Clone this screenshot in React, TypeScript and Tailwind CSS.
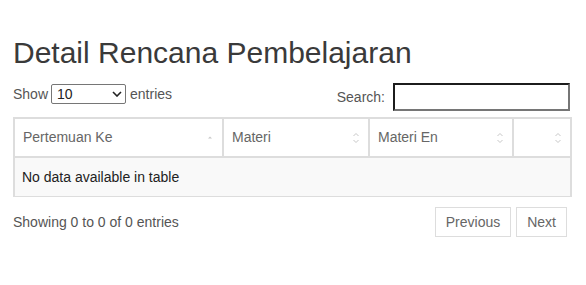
import React from "react";

function SortBoth() {
  return (
    <svg width="8" height="14" viewBox="0 0 8 14" className="shrink-0">
      <path d="M1.5 5 L4 2.5 L6.5 5" fill="none" stroke="#c8c8c8" strokeWidth="1" />
      <path d="M1.5 9 L4 11.5 L6.5 9" fill="none" stroke="#c8c8c8" strokeWidth="1" />
    </svg>
  );
}

function SortAsc() {
  return (
    <svg width="8" height="14" viewBox="0 0 8 14" className="shrink-0">
      <path d="M2 7.5 L4 5.5 L6 7.5 Z" fill="#c8c8c8" />
    </svg>
  );
}

export default function App() {
  const cols = [
    { label: "Pertemuan Ke", w: "w-[209px]", asc: true },
    { label: "Materi", w: "w-[146px]", asc: false },
    { label: "Materi En", w: "w-[144px]", asc: false },
    { label: "", w: "w-[58px]", asc: false },
  ];
  return (
    <div
      className="w-[586px] h-[285px] bg-white pl-[13px] pr-[16px] pt-[36px] text-[14px] text-[#333]"
      style={{ fontFamily: '"Liberation Sans", Arial, sans-serif' }}
    >
      <h1 className="text-[30px] leading-[33px] text-[#3a3a3a] font-normal m-0">
        Detail Rencana Pembelajaran
      </h1>

      <div className="flex justify-between items-start mt-[14px]">
        <div className="flex items-center h-[20px] mt-[1px] text-[#555]">
          <span>Show</span>
          <div className="relative ml-[3px] mr-[4px]">
            <select
              className="appearance-none w-[75px] h-[20px] border border-[#767676] rounded-[2px] bg-white pl-[5px] text-[14px] text-[#222] leading-[18px]"
              defaultValue="10"
            >
              <option value="10">10</option>
              <option value="25">25</option>
              <option value="50">50</option>
              <option value="100">100</option>
            </select>
            <svg
              width="10"
              height="6"
              viewBox="0 0 10 6"
              className="absolute right-[4px] top-[7px] pointer-events-none"
            >
              <path d="M1 1 L5 5 L9 1" fill="none" stroke="#222" strokeWidth="1.6" />
            </svg>
          </div>
          <span>entries</span>
        </div>

        <div className="flex items-center text-[#555]">
          <label className="mr-[8px]">Search:</label>
          <input
            type="search"
            className="w-[177px] h-[28px] border-2 border-t-[#1c1c1c] border-l-[#1c1c1c] border-r-[#767676] border-b-[#767676] bg-white outline-none"
          />
        </div>
      </div>

      <table className="mt-[6px] w-[557px] table-fixed border-separate border-spacing-0 border border-[#ddd]">
        <colgroup>
          {cols.map((c, i) => (
            <col key={i} className={c.w} />
          ))}
        </colgroup>
        <thead>
          <tr>
            {cols.map((c, i) => (
              <th
                key={i}
                className="h-[40px] px-[8px] border-t border-l border-r border-b-2 border-[#ddd] font-normal text-left text-[#666] bg-white"
              >
                <div className="flex items-center justify-between">
                  <span>{c.label}</span>
                  {c.asc ? <SortAsc /> : <SortBoth />}
                </div>
              </th>
            ))}
          </tr>
        </thead>
        <tbody>
          <tr>
            <td
              colSpan={4}
              className="h-[38px] px-[7px] border-l border-r border-[#ddd] bg-[#f9f9f9] text-[#222]"
            >
              No data available in table
            </td>
          </tr>
        </tbody>
      </table>

      <div className="flex justify-between items-center mt-[10px] pr-[3px]">
        <div className="text-[#555]">Showing 0 to 0 of 0 entries</div>
        <div className="flex gap-[5px]">
          <button className="h-[30px] px-[10px] border border-[#ddd] bg-white text-[#666]">
            Previous
          </button>
          <button className="h-[30px] px-[10px] border border-[#ddd] bg-white text-[#666]">
            Next
          </button>
        </div>
      </div>
    </div>
  );
}
